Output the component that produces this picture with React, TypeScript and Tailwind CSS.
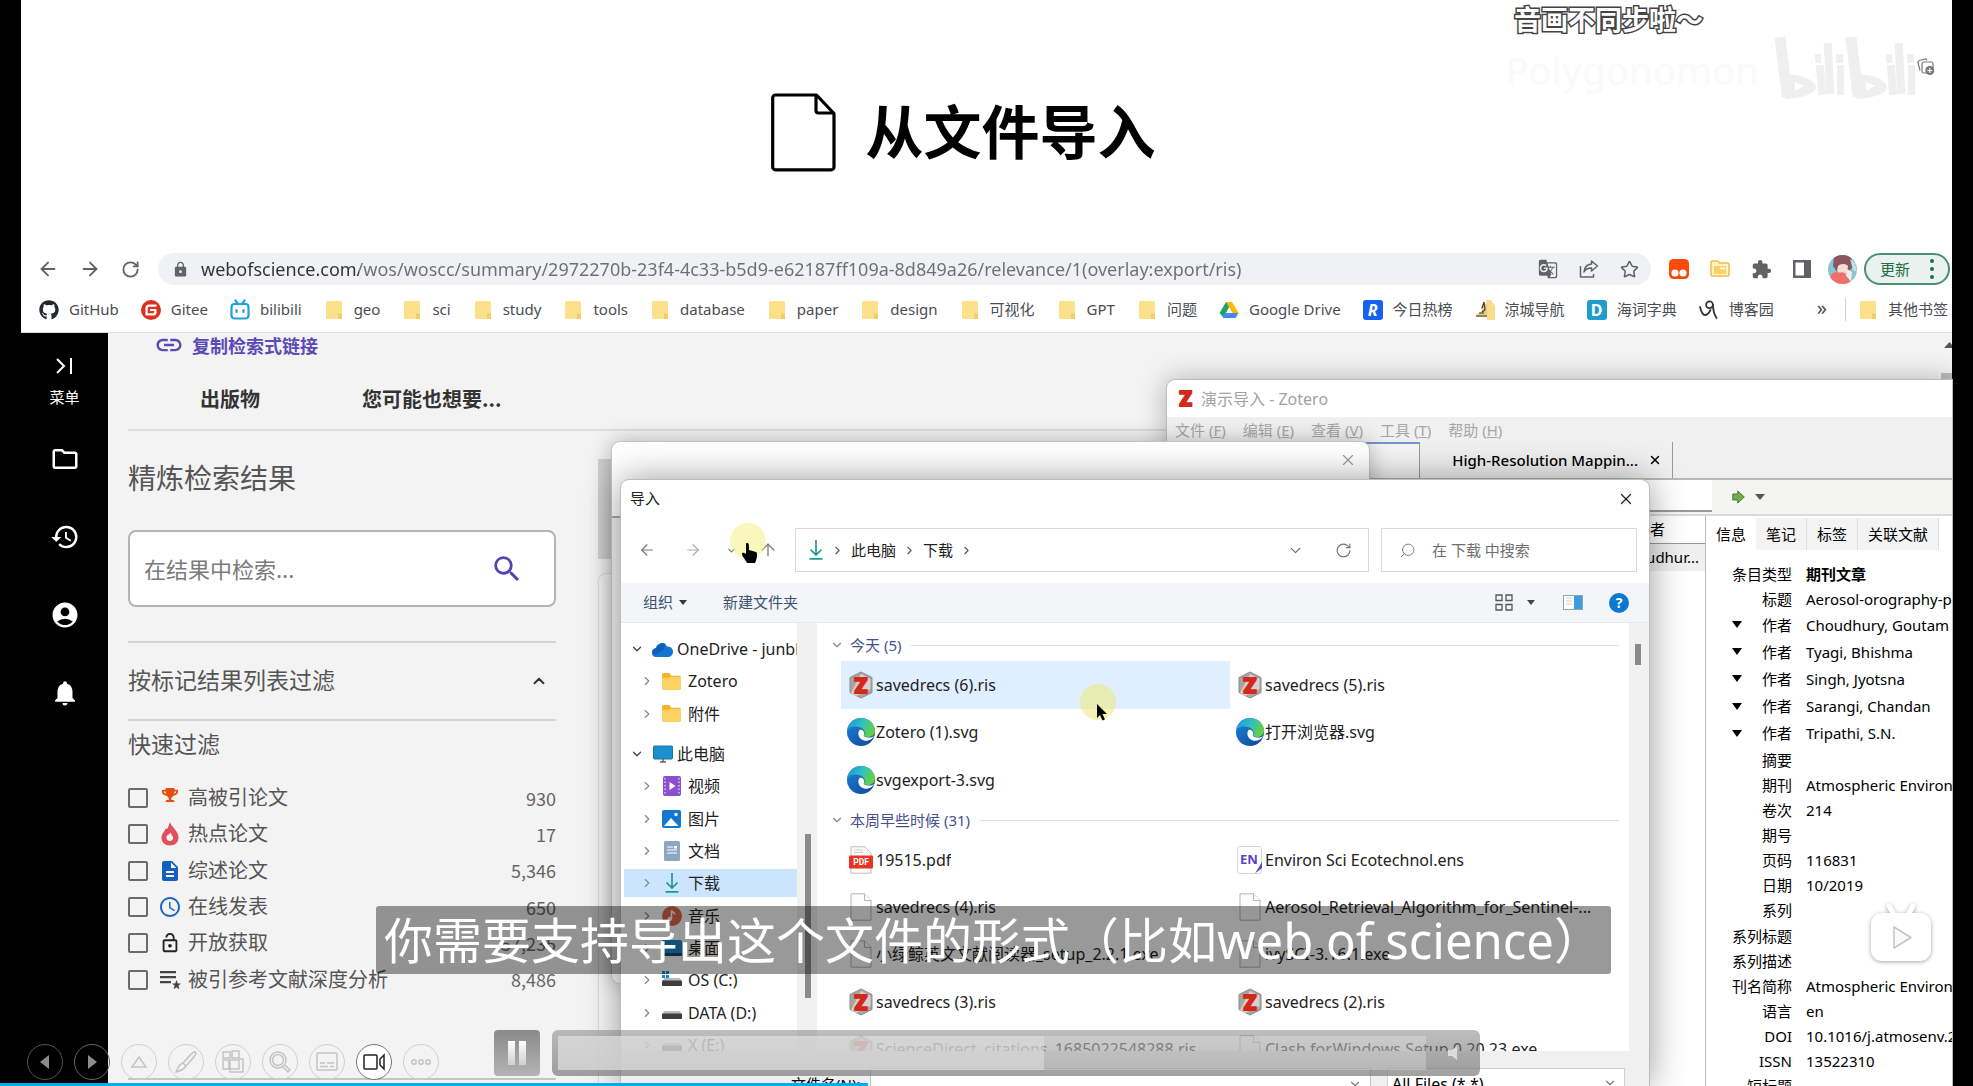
import React from "react";
import {
  ArrowLeft,
  ArrowRight,
  ArrowUp,
  ChevronDown,
  ChevronRight,
  ChevronUp,
  RotateCw,
  Search,
  Star,
  X,
} from "lucide-react";
import {
  MdAccessTime,
  MdAccountCircle,
  MdDescription,
  MdExtension,
  MdGTranslate,
  MdHistory,
  MdInsertLink,
  MdLock,
  MdNotifications,
  MdOutlineFolder,
  MdOutlineLockOpen,
  MdSearch,
} from "react-icons/md";
import { FaGithub, FaTrophy } from "react-icons/fa";
import { SiGitee } from "react-icons/si";

const UI_FONT = "font-['Noto_Sans','Noto_Sans_CJK_SC',sans-serif]";
const CJK_FONT = "font-['Noto_Sans_CJK_SC',sans-serif]";

/* ---------- small drawings ---------- */

const BiliTv = () => (
  <svg width="20" height="22" viewBox="0 0 20 22" fill="none" stroke="#20a0dc" strokeWidth="2.2" strokeLinecap="round">
    <rect x="1.500" y="5" width="17" height="14.5" rx="3" />
    <path d="M5.500 1.500 8 5M14.500 1.500 12 5" />
    <path d="M6.500 11v2M13.500 11v2" />
  </svg>
);

const BookmarkFolder = () => (
  <svg width="16" height="20" viewBox="0 0 16 20">
    <rect x="0" y="1" width="16" height="18" rx="1.5" fill="#fde08a" />
    <path d="M12 13.500h3.200a.8.8 0 0 1 .8.8V19h-4z" fill="#f3cd6b" />
  </svg>
);

const DriveLogo = () => (
  <svg width="20" height="18" viewBox="0 0 20 18">
    <path d="M7 1h6l-5 9-3.500 6.500L0.500 12z" fill="#1ea362" />
    <path d="M7 1h6l6.500 11h-6z" fill="#ffba00" />
    <path d="M6.200 12H19.500l-3 5H3.500z" fill="#4688f4" />
    <path d="M10 7.200 12.700 12H7.300z" fill="#fff" />
  </svg>
);

const LetterTile = ({ letter, tone }: { letter: string; tone: string }) => (
  <span className={`grid h-5 w-5 place-items-center rounded-[3px] text-[16px] leading-none font-bold text-white ${tone}`}>
    {letter}
  </span>
);

const CityIcon = () => (
  <svg width="20" height="20" viewBox="0 0 20 20">
    <path d="M11 0h5l4 6v14h-8z" fill="#f7dc8c" />
    <path d="M9 2 6 8l1 3-6 4v2h11V5z" fill="#e5cb8a" />
    <path d="M9 2 7 8m2-6 1 8M7 12l3-2M1 16h11M4 13l5 0" stroke="#4a3b22" strokeWidth="1.200" fill="none" />
  </svg>
);

const CnblogsIcon = () => (
  <svg width="20" height="20" viewBox="0 0 20 20" fill="none" stroke="#333" strokeWidth="1.800" strokeLinecap="round">
    <path d="M1 7c1 4 3 8 5 8s4-2 5.500-5" />
    <circle cx="10.500" cy="4.800" r="3.400" />
    <path d="M14 5c0 5 1 9 3.500 13" />
  </svg>
);

const Avatar = () => (
  <svg width="29" height="29" viewBox="0 0 29 29">
    <defs>
      <clipPath id="avatar">
        <circle cx="14.500" cy="14.500" r="14.500" />
      </clipPath>
    </defs>
    <g clipPath="url(#avatar)">
      <rect width="29" height="29" fill="#86c5d8" />
      <path d="M6 0h17l2 12-4 4-12 1-4-6z" fill="#8d5560" />
      <path d="M10 11c2-2 7-3 10 0l-1 6-6 3-4-4z" fill="#f6ddd3" />
      <path d="M3 20c4-5 8-1 12-3l5 5 3 7H2z" fill="#ef6f6c" />
      <path d="M19 14l5 3-1 9-5-5z" fill="#fbeae4" />
      <path d="M22 4l5 4 2 9-4-2z" fill="#bfe0e4" />
    </g>
  </svg>
);

const SidePanelIcon = () => (
  <svg width="18" height="18" viewBox="0 0 18 18">
    <path d="M0 0h18v18H0z" fill="#5f6368" />
    <path d="M2.500 2.500H11v13H2.500z" fill="#fff" />
  </svg>
);

const RedPanda = () => (
  <svg width="20" height="20" viewBox="0 0 20 20">
    <rect width="20" height="20" rx="4.500" fill="#ff4a0a" />
    <circle cx="6" cy="14" r="3.600" fill="#fff" />
    <circle cx="14" cy="14" r="3.600" fill="#fff" />
  </svg>
);

const YellowFolder = ({ size = 20 }: { size?: number }) => (
  <svg width={size} height={size} viewBox="0 0 20 20">
    <path d="M1 3.500C1 2.700 1.700 2 2.500 2H8l2 2.500h7.500c.8 0 1.500.7 1.500 1.500v10.500c0 .8-.7 1.500-1.500 1.500h-15C1.700 18 1 17.300 1 16.500z" fill="#f3b32b" />
    <path d="M1 7h6.500L9.500 5.500H17.500c.8 0 1.500.7 1.500 1.500v9.500c0 .8-.7 1.500-1.500 1.500h-15C1.700 18 1 17.300 1 16.500z" fill="#fdd264" />
  </svg>
);

const FolderOutlined = () => (
  <svg width="20" height="18" viewBox="0 0 20 18">
    <path d="M1 2.500C1 1.700 1.700 1 2.500 1H8l1.500 2h8c.8 0 1.500.7 1.500 1.500v10c0 .8-.7 1.500-1.500 1.500h-15C1.700 16 1 15.300 1 14.500z" fill="#fff3c9" stroke="#f3bd4b" strokeWidth="1.500" />
    <path d="M4 6h12v8H4z" fill="#fbcf63" />
    <path d="M10 7.500h5v1.800h-5z" fill="#fff" />
  </svg>
);

const ShareIcon = () => (
  <svg width="20" height="20" viewBox="0 0 20 20" fill="none" stroke="#5f6368" strokeWidth="1.500" strokeLinejoin="round">
    <path d="M1.500 7v11h13v-3" />
    <path d="M12.500 2 18.500 7l-6 5V9C9 9 6.500 10 5 13c.3-4.500 3-7.500 7.500-8z" />
  </svg>
);

const ZoteroFile = () => (
  <svg width="26" height="28" viewBox="0 0 26 28">
    <path d="M13 1 24 6.500v15L13 27 2 21.500v-15z" fill="#a9a5a2" stroke="#8f8b88" strokeWidth="1" />
    <path d="M13 3 22.500 8v10L8 25l-5-3z" fill="#d5d1ce" />
    <text x="13" y="21.500" textAnchor="middle" fontSize="21" fontWeight="900" fontFamily="Roboto, sans-serif" fill="#d4281c" stroke="#d4281c" strokeWidth="2">
      Z
    </text>
  </svg>
);

const EdgeFile = () => (
  <svg width="28" height="28" viewBox="0 0 28 28">
    <defs>
      <linearGradient id="edgeTop" x1="0" y1="0" x2="1" y2="0.400">
        <stop offset="0" stopColor="#1b8fe0" />
        <stop offset="0.550" stopColor="#2fbfc0" />
        <stop offset="1" stopColor="#63cf4a" />
      </linearGradient>
      <linearGradient id="edgeBase" x1="0" y1="0" x2="0.700" y2="1">
        <stop offset="0" stopColor="#1a86dc" />
        <stop offset="1" stopColor="#114f9e" />
      </linearGradient>
    </defs>
    <circle cx="14" cy="14" r="14" fill="url(#edgeBase)" />
    <path d="M0.500 12C1.500 5 7 0 14 0c8 0 14 6 14 12.500 0 4-3 6.500-7 6.500-3 0-4.500-1-4-2 1.500-2 .5-6-3.500-7.500C9 8 3.500 8 .5 12z" fill="url(#edgeTop)" />
    <path d="M13 11.500c-2.500 2.500-2 7 1 9.500 4 3 9 2 12-1.500l1.500-3C26 20 22 20 18.500 19c-2-.7-2-1.500-1.500-2.500.8-2-.8-5-4-5z" fill="#fff" />
  </svg>
);

const BlankFile = () => (
  <svg width="22" height="28" viewBox="0 0 22 28" fill="#fcfcfc" stroke="#b5b5b5" strokeWidth="1">
    <path d="M1 .8h13.500L21 7.500v19.700H1z" />
    <path d="M14.500.8v6.700H21" />
  </svg>
);

const PdfFile = () => (
  <svg width="24" height="28" viewBox="0 0 24 28">
    <path d="M2 .8h14L22 7v20.200H2z" fill="#fdfdfd" stroke="#bdbdbd" />
    <path d="M5 4h9M5 6.500h9" stroke="#c9c9c9" />
    <rect y="9.500" width="24" height="13" rx="1" fill="#ea3323" />
    <text x="12" y="19" textAnchor="middle" fontSize="8.500" fontWeight="700" fontFamily="Roboto, sans-serif" fill="#fff">
      PDF
    </text>
  </svg>
);

const EndnoteFile = () => (
  <svg width="26" height="28" viewBox="0 0 26 28">
    <rect x=".5" y=".5" width="24" height="27" rx="2" fill="#fff" stroke="#d6d6d6" />
    <path d="M25 16v6l-7 5.500z" fill="#5a43c8" />
    <text x="12" y="18" textAnchor="middle" fontSize="13" fontWeight="700" fontFamily="Noto Sans, sans-serif" fill="#5a43c8">
      EN
    </text>
  </svg>
);

const DownloadIcon = () => (
  <svg width="16" height="20" viewBox="0 0 16 20" fill="none" stroke="#1d9a96" strokeWidth="1.700">
    <path d="M8 0v15M2.500 9.500 8 15l5.500-5.500M1.500 18.800h13" />
  </svg>
);

const CloudIcon = () => (
  <svg width="21" height="15" viewBox="0 0 21 15">
    <path d="M4.500 15a4.500 4.500 0 0 1-.6-9A6 6 0 0 1 15 4.500a5.300 5.300 0 0 1 1.500 10.500z" fill="#1673d2" />
    <path d="M4.500 6a6 6 0 0 1 9-4l-2 6-8 5C1 12 0 7.500 4.500 6z" fill="#0f5fb8" />
  </svg>
);

const MonitorIcon = () => (
  <svg width="20" height="18" viewBox="0 0 20 18">
    <rect x=".5" y="1" width="19" height="13" rx="1" fill="#1d8fd1" stroke="#2b6f97" />
    <path d="M7 17h6M10 14v3" stroke="#55646e" strokeWidth="1.500" />
  </svg>
);

const VideoIcon = () => (
  <svg width="18" height="20" viewBox="0 0 18 20">
    <rect width="18" height="20" rx="2" fill="#8b4fd0" />
    <path d="M2 2v17M16 2v17" stroke="#d9c2f3" strokeWidth="1.500" strokeDasharray="1.500 2" />
    <path d="m6.500 6 6 4-6 4z" fill="#fff" />
  </svg>
);

const PictureIcon = () => (
  <svg width="19" height="18" viewBox="0 0 19 18">
    <rect width="19" height="18" rx="2" fill="#1277d0" />
    <path d="m2 16 7-8 7.500 8z" fill="#fff" />
    <circle cx="14" cy="4.500" r="1.700" fill="#fff" />
  </svg>
);

const DocumentIcon = () => (
  <svg width="16" height="20" viewBox="0 0 16 20">
    <rect width="16" height="20" rx="1.500" fill="#8da7c2" />
    <path d="M3 6h6M3 9h10M3 12h10" stroke="#fff" strokeWidth="1.200" />
    <rect x="10" y="5" width="3" height="2.500" fill="#fff" />
  </svg>
);

const MusicIcon = () => (
  <svg width="20" height="20" viewBox="0 0 20 20">
    <circle cx="10" cy="10" r="10" fill="#e0664a" />
    <path d="M9.500 13V4.500c1 2 3 2 3.500 4" stroke="#fff" strokeWidth="1.500" fill="none" />
    <circle cx="7.800" cy="13" r="2.200" fill="#fff" />
  </svg>
);

const DesktopIcon = () => (
  <svg width="20" height="16" viewBox="0 0 20 16">
    <rect width="20" height="16" rx="1.500" fill="#1b8ac9" />
    <path d="M0 13h20v3H0z" fill="#0d4a78" />
  </svg>
);

const DriveIcon = ({ system = false }: { system?: boolean }) => (
  <svg width="20" height="18" viewBox="0 0 20 18">
    {system && <path d="M0 0h3v3H0zM4 0h3v3H4zM0 4h3v3H0zM4 4h3v3H4z" fill="#1687d4" />}
    <path d="M2.500 7h15L20 10H0z" fill="#b9b9b9" />
    <rect y="9.500" width="20" height="5.500" rx="1" fill="#3d3d3d" />
  </svg>
);

const HexZ = () => (
  <svg width="15" height="18" viewBox="0 0 15 18">
    <text x="7.500" y="16" textAnchor="middle" fontSize="20" fontWeight="900" fontFamily="Roboto, sans-serif" fill="#cf2a1c" stroke="#cf2a1c" strokeWidth="2.200">
      Z
    </text>
  </svg>
);

const PageOutline = () => (
  <svg width="65" height="79" viewBox="0 0 65 79" fill="none" stroke="#000" strokeWidth="3.200" strokeLinejoin="round">
    <path d="M4.500 2h41L63 20.500V74a2.800 2.800 0 0 1-2.800 2.800H4.500A2.800 2.800 0 0 1 1.700 74V4.800A2.800 2.800 0 0 1 4.500 2z" />
    <path d="M45 2v15.500a2.500 2.500 0 0 0 2.500 2.500H63" />
  </svg>
);

const BiliWord = () => (
  <svg width="142" height="63" viewBox="0 0 142 63">
    {[0, 71].map((dx) => (
      <g key={dx} transform={`translate(${dx} 0)`} fill="#efefef">
        <rect x="3" y="1" width="11" height="60" transform="rotate(-7 8 30)" />
        <path fillRule="evenodd" d="M11 39c15-2 30 6 30 12 0 7-14 11-31 12zM20 46v9l9-5z" />
        <rect x="40" y="18" width="6" height="9" transform="rotate(-5 43 22)" />
        <rect x="42" y="29" width="8" height="30" transform="rotate(-5 46 44)" />
        <rect x="50" y="7" width="8" height="51" transform="rotate(-3 54 32)" />
        <rect x="61" y="18" width="7" height="9" />
        <rect x="62" y="29" width="7" height="30" />
      </g>
    ))}
  </svg>
);

const AddClip = () => (
  <svg width="18" height="18" viewBox="0 0 18 18" fill="none" stroke="#777" strokeWidth="1.200">
    <path d="M3 12.500 1 4.500c-.2-1 .3-1.800 1.200-2L8 1c1-.2 1.700.3 2 1.200" />
    <rect x="5" y="4" width="11" height="11" rx="2" fill="#fff" />
    <circle cx="12.800" cy="12.500" r="4.500" fill="#777" stroke="none" />
    <path d="M12.800 10v5M10.300 12.500h5" stroke="#fff" />
  </svg>
);

/* ---------- browser chrome ---------- */

type Bookmark = { label: string; icon: React.ReactNode };

const bookmarks: Bookmark[] = [
  { label: "GitHub", icon: <FaGithub size={20} color="#24292f" /> },
  { label: "Gitee", icon: <SiGitee size={20} color="#d8321f" /> },
  { label: "bilibili", icon: <BiliTv /> },
  { label: "geo", icon: <BookmarkFolder /> },
  { label: "sci", icon: <BookmarkFolder /> },
  { label: "study", icon: <BookmarkFolder /> },
  { label: "tools", icon: <BookmarkFolder /> },
  { label: "database", icon: <BookmarkFolder /> },
  { label: "paper", icon: <BookmarkFolder /> },
  { label: "design", icon: <BookmarkFolder /> },
  { label: "可视化", icon: <BookmarkFolder /> },
  { label: "GPT", icon: <BookmarkFolder /> },
  { label: "问题", icon: <BookmarkFolder /> },
  { label: "Google Drive", icon: <DriveLogo /> },
  { label: "今日热榜", icon: <LetterTile letter="R" tone="bg-[#1560f0] italic" /> },
  { label: "涼城导航", icon: <CityIcon /> },
  { label: "海词字典", icon: <LetterTile letter="D" tone="bg-[#1f9ccb]" /> },
  { label: "博客园", icon: <CnblogsIcon /> },
];

const URL_TEXT =
  "webofscience.com/wos/woscc/summary/2972270b-23f4-4c33-b5d9-e62187ff109a-8d849a26/relevance/1(overlay:export/ris)";

function BrowserBars() {
  return (
    <div className="border-b border-[#dcdcdc] bg-white">
      <div className="flex h-8 items-center text-[#5f6368]">
        <div className="flex w-[137px] items-center gap-5 pl-4">
          <button aria-label="后退"><ArrowLeft size={22} strokeWidth={2} /></button>
          <button aria-label="前进"><ArrowRight size={22} strokeWidth={2} /></button>
          <button aria-label="刷新"><RotateCw size={19} strokeWidth={2.300} /></button>
        </div>
        <div className="flex h-8 flex-1 items-center rounded-full bg-[#f0f1f3] pr-3">
          <MdLock size={17} className="ml-3.5 shrink-0" />
          <input
            aria-label="地址栏"
            defaultValue={URL_TEXT}
            className="ml-3 h-8 min-w-0 flex-1 bg-[linear-gradient(90deg,#303134_158px,#6b6e72_158px)] bg-clip-text text-[18px] text-transparent caret-black outline-none"
          />
          <div className="flex items-center gap-[21px]">
            <button aria-label="翻译"><MdGTranslate size={20} /></button>
            <button aria-label="分享"><ShareIcon /></button>
            <button aria-label="收藏"><Star size={19} strokeWidth={2} /></button>
          </div>
        </div>
        <div className="flex items-center gap-[21px] pr-[2px] pl-[18px]">
          <button aria-label="篡改猴"><RedPanda /></button>
          <button aria-label="文件夹"><FolderOutlined /></button>
          <button aria-label="扩展程序"><MdExtension size={21} /></button>
          <button aria-label="侧边栏"><SidePanelIcon /></button>
          <button aria-label="个人资料" className="-mr-3.5 -ml-1"><Avatar /></button>
          <button className="flex h-8 items-center gap-5 rounded-full border-2 border-[#4d8f72] bg-[#e9f2ee] px-3.5 text-[15px] text-[#256b4a]">
            更新
            <span className="grid gap-1">
              <i className="h-1 w-1 rounded-full bg-[#256b4a]" />
              <i className="h-1 w-1 rounded-full bg-[#256b4a]" />
              <i className="h-1 w-1 rounded-full bg-[#256b4a]" />
            </span>
          </button>
        </div>
      </div>
      <nav className="flex h-[47px] items-center gap-[22px] pt-0.5 pl-[18px] text-[15px] whitespace-nowrap text-[#4a4d51]">
        {bookmarks.map((b) => (
          <a key={b.label} href="#" className="flex items-center gap-2.5">
            <span className="grid w-5 place-items-center">{b.icon}</span>
            {b.label}
          </a>
        ))}
        <button className="ml-auto pb-1 text-[20px] leading-none" aria-label="更多书签">»</button>
        <a href="#" className="-ml-1 flex items-center gap-2.5 border-l border-[#cfcfcf] pr-1 pl-3">
          <span className="grid w-5 place-items-center"><BookmarkFolder /></span>
          其他书签
        </a>
      </nav>
    </div>
  );
}

/* ---------- Web of Science page ---------- */

const filters = [
  { label: "高被引论文", count: "930", icon: <FaTrophy size={16} color="#e2500f" className="-mt-1.5" /> },
  {
    label: "热点论文",
    count: "17",
    icon: (
      <svg width="18" height="24" viewBox="0 0 18 24">
        <path fillRule="evenodd" d="M9 0c1 5 8 8 8.500 15 .3 5-3.500 8.500-8.500 8.500S.3 20 .5 15.500C.7 11 4 9.500 4.500 6.500 7 8 7 5 9 0zM8.500 19c2.500 0 4-1.500 3.500-4-.3-1.500-2-2-2-4.500-2 2-5 3-4.500 5.500.2 2 1.500 3 3 3z" fill="#e0505c" />
      </svg>
    ),
  },
  { label: "综述论文", count: "5,346", icon: <MdDescription size={24} color="#1461bd" /> },
  { label: "在线发表", count: "650", icon: <MdAccessTime size={24} color="#1d6bc0" /> },
  { label: "开放获取", count: "57,235", icon: <MdOutlineLockOpen size={22} color="#222" /> },
  {
    label: "被引参考文献深度分析",
    count: "8,486",
    icon: (
      <svg width="22" height="22" viewBox="0 0 22 22" fill="#444">
        <path d="M1 2h16v2.200H1zM1 7h16v2.200H1zM1 12h11v2.200H1z" />
        <path d="m17.500 11 1.300 3.400h3.200l-2.600 2.200 1 3.600-2.900-2-2.900 2 1-3.600-2.600-2.200h3.200z" />
      </svg>
    ),
  },
];

function SideMenu() {
  return (
    <aside className="flex w-[87px] shrink-0 flex-col items-center bg-black text-white">
      <button className="mt-6 flex flex-col items-center text-[15px] leading-6">
        <svg width="18" height="18" viewBox="0 0 18 18" fill="none" stroke="#fff" strokeWidth="2">
          <path d="m2 2 7 7-7 7M16 1v16" />
        </svg>
        <span className="mt-2.5">菜单</span>
      </button>
      <button aria-label="文件夹" className="mt-[35px]"><MdOutlineFolder size={30} /></button>
      <button aria-label="历史" className="mt-12"><MdHistory size={30} /></button>
      <button aria-label="账户" className="mt-12"><MdAccountCircle size={30} /></button>
      <button aria-label="通知" className="mt-12"><MdNotifications size={30} /></button>
    </aside>
  );
}

function SciencePage() {
  return (
    <div className="flex min-h-0 flex-1 bg-[#f3f3f3]">
      <SideMenu />
      <main className={`relative flex-1 overflow-hidden pl-5 text-[#555] ${CJK_FONT}`}>
        <a href="#" className="ml-[26px] flex h-6 w-fit items-center gap-2 text-[18px] font-bold text-[#5b4ab5]">
          <MdInsertLink size={30} />
          复制检索式链接
        </a>
        <nav className="flex h-[74px] items-center gap-[102px] border-b-2 border-[#dedede] pt-3 pl-[72px] text-[20px] font-bold text-[#333]">
          <a href="#">出版物</a>
          <a href="#">您可能也想要...</a>
        </nav>
        <section className="w-[428px]">
          <h2 className="pt-[26px] text-[28px] leading-10">精炼检索结果</h2>
          <label className="mt-[33px] flex h-[77px] items-center rounded-lg border-2 border-[#b4b4b4] bg-white pr-[30px] pl-3.5">
            <input aria-label="在结果中检索" placeholder="在结果中检索..." className="min-w-0 flex-1 text-[22px] outline-none placeholder:text-[#7a7a7a]" />
            <MdSearch size={34} color="#5443ae" />
          </label>
          <div className="mt-[34px] flex h-20 items-center justify-between border-y-2 border-[#d4d4d4] pr-2 text-[23px]">
            <span className="pb-1">按标记结果列表过滤</span>
            <button aria-label="收起"><ChevronUp size={18} strokeWidth={2.500} color="#333" /></button>
          </div>
          <h3 className="mt-1.5 text-[23px] leading-8">快速过滤</h3>
          <ul className="mt-[21px] grid h-[218px] auto-rows-fr text-[20px]">
            {filters.map((f) => (
              <li key={f.label} className="flex items-center">
                <label className="flex flex-1 items-center leading-7">
                  <input type="checkbox" className="mr-2.5 h-5 w-5 appearance-none rounded-[2px] border-2 border-[#6b6b6b]" />
                  <span className="mr-1.5 grid w-6 place-items-center">{f.icon}</span>
                  <span className="pb-0.5">{f.label}</span>
                </label>
                <span className="text-[18px] text-[#666]">{f.count}</span>
              </li>
            ))}
          </ul>
          <hr className="mt-20 border-t-2 border-[#c4c4c4]" />
        </section>
        <div className="absolute top-[126px] left-[490px] h-[100px] w-4 bg-[#d2d2d2]" />
        <div className="absolute top-[240px] bottom-0 left-[490px] w-5 rounded-tl-lg border-t border-l border-[#dcdcdc] bg-[#f6f6f6]" />
        <div className="absolute top-0 right-0 flex h-12 w-[11px] flex-col justify-between overflow-hidden">
          <svg width="16" height="16" viewBox="0 0 16 16" className="mt-1.5"><path d="M3 9 8.500 3l5.500 6z" fill="#555" /></svg>
          <i className="h-2 w-full bg-[#bdbdbd]" />
        </div>
      </main>
    </div>
  );
}

/* ---------- Zotero window ---------- */

const topFields = [
  { name: "条目类型", value: "期刊文章" },
  { name: "标题", value: "Aerosol-orography-precipitation" },
];
const authors = ["Choudhury, Goutam", "Tyagi, Bhishma", "Singh, Jyotsna", "Sarangi, Chandan", "Tripathi, S.N."];
const fields = [
  { name: "摘要", value: "" },
  { name: "期刊", value: "Atmospheric Environment" },
  { name: "卷次", value: "214" },
  { name: "期号", value: "" },
  { name: "页码", value: "116831" },
  { name: "日期", value: "10/2019" },
  { name: "系列", value: "" },
  { name: "系列标题", value: "" },
  { name: "系列描述", value: "" },
  { name: "刊名简称", value: "Atmospheric Environment" },
  { name: "语言", value: "en" },
  { name: "DOI", value: "10.1016/j.atmosenv.2019.116831" },
  { name: "ISSN", value: "13522310" },
  { name: "短标题", value: "" },
];

function Field({ name, value, author = false }: { name: string; value: string; author?: boolean }) {
  return (
    <div className="flex items-center leading-6 whitespace-nowrap">
      <dt className="flex w-[86px] shrink-0 items-center justify-end">
        {author && <button aria-label="作者类型" className="mr-5 h-0 w-0 border-x-[5px] border-t-[7px] border-x-transparent border-t-black" />}
        <span>{name}</span>
      </dt>
      <dd className={name === "条目类型" ? "pl-3.5 font-bold" : "pl-3.5"}>{value}</dd>
    </div>
  );
}

function ZoteroWindow() {
  const menus: [string, string][] = [["文件", "F"], ["编辑", "E"], ["查看", "V"], ["工具", "T"], ["帮助", "H"]];
  return (
    <div className="absolute top-[380px] right-[21px] bottom-0 left-[1167px] flex flex-col overflow-hidden rounded-tl-lg bg-white text-[15px] text-black shadow-[0_0_28px_rgba(0,0,0,0.3)] ring-1 ring-[#bcbcbc]">
      <header className="flex h-[37px] shrink-0 items-center gap-2 pl-[11px] text-[16px] text-[#a2a2a2]">
        <HexZ />
        演示导入 - Zotero
      </header>
      <nav className="flex h-[25px] shrink-0 items-center gap-[17px] bg-[#f0f0f0] pl-2 leading-6 text-[#a6a6a6]">
        {menus.map(([label, key]) => (
          <button key={key}>
            {label} (<span className="underline">{key}</span>)
          </button>
        ))}
      </nav>
      <div className="flex h-[38px] shrink-0 border-b-2 border-[#b9b9b9] bg-[#f0f0f0]">
        <div className="w-[253px] border-t-2 border-r border-t-[#6f96cf] border-r-[#999] bg-[#f5f5f5]" />
        <div className="flex w-[253px] items-center justify-end gap-2.5 border-r border-[#999] pr-2.5 font-medium">
          High-Resolution Mappin...
          <button aria-label="关闭标签"><X size={14} strokeWidth={2.500} /></button>
        </div>
      </div>
      <div className="flex h-9 shrink-0 items-center gap-3 border-b-2 border-[#dadada] bg-[#f4f4f2]">
        <div className="h-8 w-[545px] self-start border-b-2 border-[#999] bg-white" />
        <button aria-label="定位" className="ml-2 flex items-center gap-2.5">
          <svg width="13" height="14" viewBox="0 0 13 14"><path d="M.8 4h5V1l6.500 6L5.800 13v-3h-5z" fill="#6fae4c" stroke="#4c7a35" /></svg>
          <i className="h-0 w-0 border-x-[5px] border-t-[6px] border-x-transparent border-t-[#555]" />
        </button>
      </div>
      <div className="flex min-h-0 flex-1">
        <div className="w-[539px] shrink-0 border-r border-[#bbb]">
          <div className="flex h-7 items-center border-b border-[#999] pr-10"><span className="ml-auto">创建者</span></div>
          <div className="flex h-[27px] items-center bg-[#efefef] pr-1.5"><span className="ml-auto">Choudhur...</span></div>
        </div>
        <div className="min-w-0 flex-1">
          <div className="mt-0.5 flex h-8 items-center" role="tablist">
            {["信息", "笔记", "标签", "关联文献"].map((t, i) => (
              <button
                key={t}
                role="tab"
                aria-selected={i === 0}
                className={i === 0 ? "h-8 bg-white px-2.5" : "h-8 border-r border-[#dedede] bg-[#f3f3f3] px-2.5"}
              >
                {t}
              </button>
            ))}
          </div>
          <dl className="mt-[11px]">
            <div className="grid h-[50px] auto-rows-fr">
              {topFields.map((f) => <Field key={f.name} {...f} />)}
            </div>
            <div className="grid h-[136px] auto-rows-fr">
              {authors.map((a) => <Field key={a} name="作者" value={a} author />)}
            </div>
            <div className="grid h-[352px] auto-rows-fr">
              {fields.map((f) => <Field key={f.name} {...f} />)}
            </div>
          </dl>
        </div>
      </div>
    </div>
  );
}

/* ---------- file dialog ---------- */

type Node = { label: string; icon: React.ReactNode; active?: boolean };

const cloudNodes: Node[] = [
  { label: "Zotero", icon: <YellowFolder size={21} /> },
  { label: "附件", icon: <YellowFolder size={21} /> },
];
const pcNodes: Node[] = [
  { label: "视频", icon: <VideoIcon /> },
  { label: "图片", icon: <PictureIcon /> },
  { label: "文档", icon: <DocumentIcon /> },
  { label: "下载", icon: <DownloadIcon />, active: true },
  { label: "音乐", icon: <MusicIcon /> },
  { label: "桌面", icon: <DesktopIcon /> },
  { label: "OS (C:)", icon: <DriveIcon system /> },
  { label: "DATA (D:)", icon: <DriveIcon /> },
  { label: "X (E:)", icon: <DriveIcon /> },
];

function RootNode({ label, icon }: { label: string; icon: React.ReactNode }) {
  return (
    <button className="flex w-full items-center overflow-hidden whitespace-nowrap">
      <ChevronDown size={14} strokeWidth={2.200} color="#444" className="mr-2 shrink-0" />
      <span className="mr-1 grid w-[21px] shrink-0 place-items-center">{icon}</span>
      <span>{label}</span>
    </button>
  );
}

function ChildNode({ label, icon, active }: Node) {
  return (
    <button
      className={
        active
          ? "-ml-[6px] flex h-7 w-[173px] items-center self-center bg-[#cce5ff] pl-4"
          : "flex w-full items-center pl-2.5"
      }
    >
      <ChevronRight size={14} color="#888" className="mr-[7px] shrink-0" />
      <span className="mr-1.5 grid w-[21px] shrink-0 place-items-center">{icon}</span>
      <span>{label}</span>
    </button>
  );
}

type FileRow = { name: string; icon: React.ReactNode; hot?: boolean };

function FileItem({ name, icon, hot }: FileRow) {
  return (
    <button className={hot ? "flex items-center bg-[#e0efff] pl-1.5" : "flex items-center pl-1.5"}>
      <span className="mr-px grid w-7 shrink-0 place-items-center">{icon}</span>
      <span className="truncate">{name}</span>
    </button>
  );
}

const today: FileRow[] = [
  { name: "savedrecs (6).ris", icon: <ZoteroFile />, hot: true },
  { name: "savedrecs (5).ris", icon: <ZoteroFile /> },
  { name: "Zotero (1).svg", icon: <EdgeFile /> },
  { name: "打开浏览器.svg", icon: <EdgeFile /> },
  { name: "svgexport-3.svg", icon: <EdgeFile /> },
];
const week: FileRow[] = [
  { name: "19515.pdf", icon: <PdfFile /> },
  { name: "Environ Sci Ecotechnol.ens", icon: <EndnoteFile /> },
  { name: "savedrecs (4).ris", icon: <BlankFile /> },
  { name: "Aerosol_Retrieval_Algorithm_for_Sentinel-...", icon: <BlankFile /> },
  { name: "小绿鲸英文文献阅读器_setup_2.2.1.exe", icon: <BlankFile /> },
  { name: "ivySCI-3.16.1.exe", icon: <BlankFile /> },
  { name: "savedrecs (3).ris", icon: <ZoteroFile /> },
  { name: "savedrecs (2).ris", icon: <ZoteroFile /> },
  { name: "ScienceDirect_citations_1685022548288.ris", icon: <ZoteroFile /> },
  { name: "Clash.for.Windows.Setup.0.20.23.exe", icon: <BlankFile /> },
];

function FileGroup({ title, files, height }: { title: string; files: FileRow[]; height: string }) {
  return (
    <section>
      <h4 className="flex h-8 items-center gap-1.5 pl-[13px] text-[15px] text-[#47508f]">
        <ChevronDown size={14} color="#888" />
        {title}
        <i className="ml-1 h-px flex-1 bg-[#dedede]" />
      </h4>
      <div className={`grid auto-rows-fr grid-cols-2 pl-6 ${height}`}>
        {files.map((f) => <FileItem key={f.name} {...f} />)}
      </div>
    </section>
  );
}

function FileDialog() {
  return (
    <div className="absolute top-[480px] bottom-0 left-[621px] flex w-[1028px] flex-col overflow-hidden rounded-t-lg bg-white text-[15px] text-[#222] shadow-[0_0_36px_rgba(0,0,0,0.42)] ring-1 ring-[#bdbdbd]">
      <header className="flex h-[37px] shrink-0 items-center justify-between pr-3.5 pl-[9px]">
        导入
        <button aria-label="关闭"><X size={18} strokeWidth={1.600} /></button>
      </header>
      <div className="flex h-[66px] shrink-0 items-center pr-3 pl-[17px]">
        <div className="flex w-[157px] shrink-0 items-center text-[#777]">
          <button aria-label="返回"><ArrowLeft size={18} strokeWidth={1.500} /></button>
          <button aria-label="前进" className="ml-7 text-[#aaa]"><ArrowRight size={18} strokeWidth={1.500} /></button>
          <button aria-label="最近位置" className="ml-6"><ChevronDown size={11} strokeWidth={2.500} /></button>
          <button aria-label="向上" className="ml-[21px]"><ArrowUp size={20} strokeWidth={1.500} /></button>
        </div>
        <nav className="flex h-11 w-[574px] shrink-0 items-center gap-[7px] border border-[#d9d9d9] pr-4 pl-3">
          <DownloadIcon />
          <ChevronRight size={13} color="#555" />
          <button>此电脑</button>
          <ChevronRight size={13} color="#555" />
          <button>下载</button>
          <ChevronRight size={13} color="#555" />
          <button aria-label="展开" className="ml-auto"><ChevronDown size={17} color="#666" strokeWidth={1.600} /></button>
          <button aria-label="刷新" className="ml-6"><RotateCw size={17} color="#777" strokeWidth={1.600} /></button>
        </nav>
        <label className="ml-3 flex h-11 min-w-0 flex-1 items-center gap-4 border border-[#d9d9d9] pl-[17px]">
          <Search size={17} strokeWidth={1.300} color="#777" className="shrink-0 -scale-x-100" />
          <input aria-label="搜索" placeholder="在 下载 中搜索" className="min-w-0 flex-1 outline-none placeholder:text-[#6e6e6e]" />
        </label>
      </div>
      <div className="flex h-10 shrink-0 items-center border-b border-[#e6e8ea] bg-[#f3f5f8] pr-5 pl-[22px] text-[#3a5370]">
        <button className="flex items-center gap-1.5">
          组织
          <i className="h-0 w-0 border-x-4 border-t-[5px] border-x-transparent border-t-[#334]" />
        </button>
        <button className="ml-9">新建文件夹</button>
        <button aria-label="视图" className="ml-auto flex items-center gap-3.5">
          <svg width="18" height="17" viewBox="0 0 18 17" fill="none" stroke="#555" strokeWidth="1.300">
            <path d="M1 1h6v5.500H1zM11 1h6v5.500h-6zM1 10.500h6V16H1zM11 10.500h6V16h-6z" />
          </svg>
          <i className="h-0 w-0 border-x-4 border-t-[5px] border-x-transparent border-t-[#444]" />
        </button>
        <button aria-label="预览窗格" className="ml-7">
          <svg width="20" height="15" viewBox="0 0 20 15">
            <rect x=".5" y=".5" width="19" height="14" fill="#fff" stroke="#8aa" />
            <path d="M3 3h6M3 6h6M3 9h6" stroke="#ccd" />
            <rect x="11" y="1" width="8" height="13" fill="#3d9be2" />
          </svg>
        </button>
        <button aria-label="帮助" className="ml-[26px] grid h-5 w-5 place-items-center rounded-full bg-[#0b78d2] text-[14px] leading-none font-bold text-white">
          ?
        </button>
      </div>

      <div className="flex h-[428px] shrink-0 overflow-hidden text-[16px]">
        <div className="w-[176px] shrink-0 overflow-hidden pt-2.5 pl-[9px]">
          <div className="grid h-[97px] auto-rows-fr">
            <RootNode label="OneDrive - junblue" icon={<CloudIcon />} />
            {cloudNodes.map((n) => <ChildNode key={n.label} {...n} />)}
          </div>
          <div className="mt-2 grid h-[323px] auto-rows-fr">
            <RootNode label="此电脑" icon={<MonitorIcon />} />
            {pcNodes.map((n) => <ChildNode key={n.label} {...n} />)}
          </div>
        </div>
        <div className="w-5 shrink-0 bg-[#f1f1f1] pt-[211px] pl-2">
          <div className="h-[164px] w-1.5 bg-[#8a8a8a]" />
        </div>
        <div className="flex-1 overflow-hidden pt-1.5 pr-2.5">
          <FileGroup title="今天 (5)" files={today} height="h-[143px]" />
          <FileGroup title="本周早些时候 (31)" files={week} height="h-[237px]" />
        </div>
        <div className="w-5 shrink-0 bg-[#f1f1f1] pt-[21px] pl-1.5">
          <div className="h-[21px] w-1.5 bg-[#8a8a8a]" />
        </div>
      </div>

      <div className="flex flex-1 items-start overflow-hidden bg-[#f0f0f0] pt-[17px] pr-6 pl-[170px] text-black">
        <label htmlFor="file-name" className="h-8 w-[79px] text-[15px] leading-8">文件名(N):</label>
        <div className="flex h-8 w-[501px] shrink-0 items-center border border-[#b5c8d6] bg-white pr-2">
          <input id="file-name" className="min-w-0 flex-1 outline-none" />
          <ChevronDown size={14} color="#777" />
        </div>
        <div className="relative ml-4 flex-1">
          <select aria-label="文件类型" className="h-8 w-full appearance-none border border-[#d0d0d0] bg-white pl-1 text-[16px] outline-none">
            <option>All Files (*.*)</option>
          </select>
          <ChevronDown size={14} color="#777" className="absolute top-2 right-2" />
        </div>
      </div>
    </div>
  );
}

/* ---------- slide show and player overlays ---------- */

function SlideControls() {
  const ring = "grid h-9 w-9 place-items-center rounded-full border-[1.5px]";
  const light = `${ring} border-[#cfcfcf] text-[#c4c4c4]`;
  const s = { fill: "none", stroke: "currentColor", strokeWidth: 1.5 };
  return (
    <div className="absolute bottom-[6px] left-[27px] flex gap-[11px]">
      <button aria-label="上一张" className={`${ring} border-[#555] text-[#8c8c8c]`}>
        <svg width="18" height="18" viewBox="0 0 18 18" fill="currentColor"><path d="M13 2v14L4 9z" /></svg>
      </button>
      <button aria-label="下一张" className={`${ring} border-[#666] text-[#8c8c8c]`}>
        <svg width="18" height="18" viewBox="0 0 18 18" fill="currentColor"><path d="M5 2v14l9-7z" /></svg>
      </button>
      <button aria-label="隐藏" className={light}>
        <svg width="18" height="14" viewBox="0 0 18 14" {...s}><path d="M9 2 16 12H2z" /></svg>
      </button>
      <button aria-label="画笔" className={light}>
        <svg width="24" height="24" viewBox="0 0 24 24" {...s}><path d="M21 2c2 1 1 3-9 14l-3-3C18 3 20 1 21 2zM9 13l3 3c-2 3-5 5-10 6l1-2c1-3 3-6 6-7z" /></svg>
      </button>
      <button aria-label="所有幻灯片" className={light}>
        <svg width="24" height="24" viewBox="0 0 24 24" {...s}><path d="M2 2h7v6H2zM11 1h7v7h-7zM2 10h6v9H2zM9 10h9v9H9zM18 9h4v13H9v-3" /></svg>
      </button>
      <button aria-label="放大" className={light}>
        <svg width="24" height="24" viewBox="0 0 24 24" {...s}><circle cx="10" cy="10" r="8" /><circle cx="10" cy="10" r="5.500" /><path d="m15 17 5 5 2-2-5-5" /></svg>
      </button>
      <button aria-label="字幕" className={light}>
        <svg width="24" height="20" viewBox="0 0 24 20" {...s}><rect x="2" y="1" width="20" height="17" rx="1" /><path d="M5 11h5m2 0h7M5 14.500h8m2 0h4" /></svg>
      </button>
      <button aria-label="摄像头" className={`${ring} border-[#777] bg-white text-[#222]`}>
        <svg width="24" height="18" viewBox="0 0 24 18" {...s}><rect x="2" y="2" width="13" height="14" rx="1" /><path d="M18 6l4-4v14l-4-4z" /></svg>
      </button>
      <button aria-label="更多" className={light}>
        <svg width="22" height="8" viewBox="0 0 22 8" {...s}><circle cx="4" cy="4" r="2.200" /><circle cx="11" cy="4" r="2.200" /><circle cx="18" cy="4" r="2.200" /></svg>
      </button>
    </div>
  );
}

function MediaBar() {
  return (
    <div className="absolute bottom-2.5 left-[494px] flex gap-3">
      <button aria-label="暂停" className="flex h-[46px] w-[46px] items-center justify-center gap-1 rounded-[4px] bg-gradient-to-b from-[#8a8a8a] to-[#b4b4b4]">
        <i className="h-6 w-[7px] bg-gradient-to-b from-white to-[#cfcfcf]" />
        <i className="h-6 w-[7px] bg-gradient-to-b from-white to-[#cfcfcf]" />
      </button>
      <div className="flex h-[46px] w-[928px] items-center rounded-[6px] bg-gradient-to-b from-[#7d7d7d80] to-[#777777b0] pr-5 pl-1.5">
        <div className="relative h-[34px] flex-1 bg-[#ffffff40]">
          <div className="h-full w-[56%] bg-[#dcdcdc99]" />
          <input type="range" aria-label="播放进度" defaultValue={56} className="absolute inset-0 h-full w-full opacity-0" />
        </div>
        <svg width="12" height="14" viewBox="0 0 12 14" className="ml-[22px]"><path d="M0 4h4l5-4v14L4 10H0z" fill="#dcdcdc" /></svg>
      </div>
    </div>
  );
}

export default function App() {
  return (
    <div className={`relative h-screen w-full overflow-hidden bg-black px-[21px] ${UI_FONT}`}>
      <div className="flex h-full flex-col bg-white">
        <header className="flex h-[253px] shrink-0 items-start justify-center gap-[29px] pt-[93px] pr-[46px]">
          <PageOutline />
          <h1 className={`text-[58px] leading-[72px] font-bold text-black ${CJK_FONT}`}>从文件导入</h1>
        </header>
        <BrowserBars />
        <SciencePage />
      </div>

      <ZoteroWindow />

      <div className="absolute top-[442px] left-[612px] h-[541px] w-[757px] overflow-hidden rounded-lg bg-white shadow-[0_0_22px_rgba(0,0,0,0.3)] ring-1 ring-[#c4c4c4]">
        <div className="flex h-[76px] items-start justify-end border-b-2 border-[#a8a8a8] pt-[9px] pr-3">
          <button aria-label="关闭"><X size={18} strokeWidth={1.500} color="#999" /></button>
        </div>
        <div className="h-full bg-[#f3f3f3]" />
      </div>

      <FileDialog />

      {/* pointers with click halos */}
      <div className="absolute top-[523px] left-[730px] h-9 w-9 rounded-full bg-[#f5f07a80]" />
      <svg className="absolute top-[542px] left-[741px]" width="18" height="22" viewBox="0 0 18 22">
        <path d="M6 1c2 0 2 1 2 7l7 2c2 1 1 7-1 11H6C4 17 1 14 1 12s2-1 4 0V2c0-.6.400-1 1-1z" fill="#000" />
      </svg>
      <div className="absolute top-[684px] left-[1080px] h-9 w-9 rounded-full bg-[#eee86a80]" />
      <svg className="absolute top-[704px] left-[1097px]" width="12" height="17" viewBox="0 0 12 17">
        <path d="M0 0v14l3-3 2.500 5.500 2.500-1L5.500 10H10z" fill="#000" />
      </svg>

      {/* floating comment and watermark */}
      <div className={`absolute -top-px right-[270px] text-[27px] leading-10 font-bold whitespace-nowrap text-white [paint-order:stroke] [-webkit-text-stroke:3px_#444] ${CJK_FONT}`}>
        音画不同步啦～
      </div>
      <div className="absolute top-9 right-[38px] flex items-start">
        <span className="mr-4 pt-2 text-[38px] leading-[52px] font-medium text-[#fafafa]">Polygonomon</span>
        <BiliWord />
        <span className="pt-[22px]"><AddClip /></span>
      </div>

      <button aria-label="播放" className="absolute top-[902px] right-[39px]">
        <svg width="66" height="66" viewBox="0 0 66 66" className="drop-shadow-[0_1px_2px_rgba(0,0,0,0.35)]">
          <path d="m21 4 5 9M45 4l-5 9" stroke="#fff" strokeWidth="5" strokeLinecap="round" />
          <rect x="3" y="11" width="60" height="48" rx="11" fill="#fff" />
          <path d="m26 25 17 10.500L26 46z" fill="#fafafa" stroke="#c4c4c4" strokeWidth="1.500" strokeLinejoin="round" />
        </svg>
      </button>

      <SlideControls />
      <MediaBar />

      <p className="absolute top-[906px] left-[376px] h-[68px] w-[1235px] rounded-[3px] bg-black/40 pl-2 text-[49px] leading-[68px] whitespace-nowrap text-white">
        你需要支持导出这个文件的形式（比如web of science）
      </p>
      <div className="absolute bottom-0 left-0 h-[3px] w-[44%] bg-[#00aeec]" />
    </div>
  );
}
